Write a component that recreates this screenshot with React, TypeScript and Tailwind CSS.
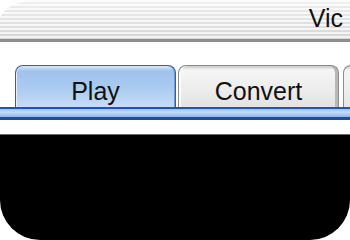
import React from 'react';

const tabBase =
  'h-[42px] w-[161px] shrink-0 rounded-t-[8px] border border-b-0 flex items-center justify-center text-[25px] leading-none text-[#111] pt-[9px]';

export default function App() {
  return (
    <div className="w-[350px] h-[240px] bg-white overflow-hidden flex flex-col font-['Liberation_Sans',Arial,sans-serif]">
      {/* title bar */}
      <header className="h-[42px] shrink-0 rounded-tl-[40px_20px] border-b-[3px] border-[#8f8f8f] bg-[repeating-linear-gradient(to_bottom,rgba(255,255,255,0.75)_0px,rgba(255,255,255,0.75)_2px,transparent_2px,transparent_4px),linear-gradient(to_bottom,#f0f0f0,#d6d6d6)] flex items-start justify-end pr-[7px] pt-[6px]">
        <span className="text-[25px] leading-none text-[#111]">Vic</span>
      </header>

      <div className="h-[23px] shrink-0" />

      {/* tabs */}
      <nav className="h-[42px] shrink-0 flex items-end gap-[2px] pl-[15px]">
        <button className={`${tabBase} border-[#2f5fb3] bg-[linear-gradient(to_bottom,#dbe9f9_0px,#9fc3ee_5px,#a9caf0_50%,#c6dcf6_100%)] shadow-[inset_1px_0_0_#e6f0fc,inset_-1px_0_0_#6f9ad8]`}>
          Play
        </button>
        <button className={`${tabBase} w-[160px] border-[#8c8c8c] bg-[linear-gradient(to_bottom,#c9c9c9_0px,#f6f6f6_4px,#ececec_60%,#e2e2e2_100%)] shadow-[inset_2px_0_0_#fafafa,inset_-3px_0_0_#b8b8b8]`}>
          Convert
        </button>
        <div className="h-[42px] w-[20px] shrink-0 ml-[2px] rounded-tl-[8px] border border-b-0 border-r-0 border-[#8c8c8c] bg-[linear-gradient(to_bottom,#c9c9c9_0px,#f6f6f6_4px,#e6e6e6_100%)]" />
      </nav>

      {/* blue rule */}
      <div className="h-[13px] shrink-0 border-t-2 border-b-[3px] border-t-[#1d56b4] border-b-[#1a4fa8] bg-[linear-gradient(to_bottom,#9ec2ee,#c4dbf6_40%,#a9c9f0_70%,#8cb6ea)]" />

      <div className="h-[14px] shrink-0" />

      {/* video area */}
      <div className="flex-1 bg-black border-t border-[#6a6a6a] rounded-b-[40px]" />
    </div>
  );
}
